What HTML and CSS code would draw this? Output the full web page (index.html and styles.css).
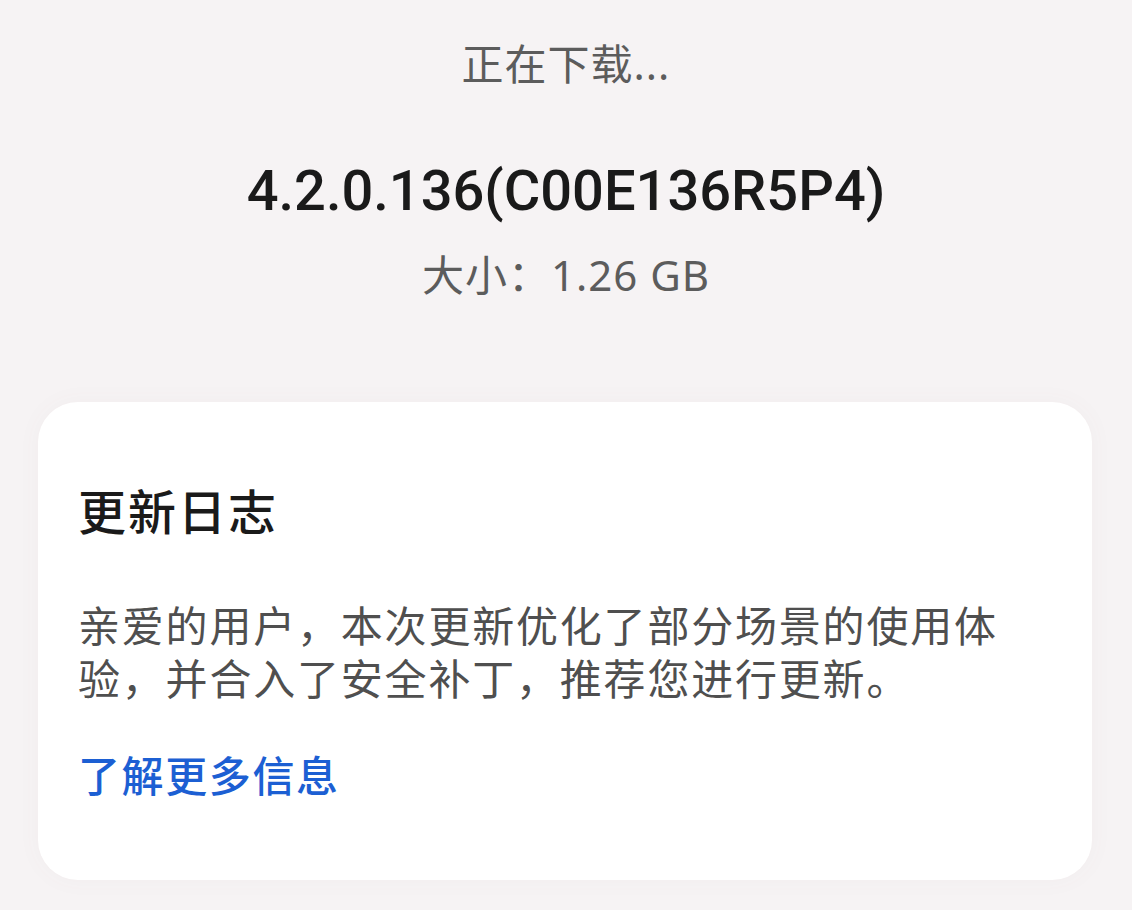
FILE: index.html
```html
<!DOCTYPE html>
<html lang="zh-CN">
<head>
<meta charset="UTF-8">
<meta name="viewport" content="width=device-width, initial-scale=1.0">
<title>软件更新</title>
<link rel="stylesheet" href="styles.css">
</head>
<body>

<div class="page">
  <div class="download-info">
    <div class="status">正在下载...</div>
    <div class="version">4.2.0.136(C00E136R5P4)</div>
    <div class="size">大小：1.26 GB</div>
  </div>

  <div class="changelog">
    <div class="changelog-title">更新日志</div>
    <p class="changelog-text">亲爱的用户，本次更新优化了部分场景的使用体验，并合入了安全补丁，推荐您进行更新。</p>
    <a class="more-link" href="#">了解更多信息</a>
  </div>
</div>

</body>
</html>
```

FILE: styles.css
```css
body {
  font-family: "Noto Sans", "Noto Sans CJK SC", sans-serif;
  margin: 0;
  padding: 0;
  background-color: #f6f3f4;
  color: #1c1c1c;
}

.page {
  width: 1132px;
  height: 910px;
  overflow: hidden;
}

.download-info {
  display: flex;
  flex-direction: column;
  align-items: center;
  padding-top: 34px;
}

.status {
  font-size: 42px;
  line-height: 60px;
  color: #5c5c5c;
  letter-spacing: 1px;
}

.version {
  margin-top: 65px;
  font-family: Roboto, "Noto Sans", sans-serif;
  font-size: 56px;
  font-weight: 500;
  line-height: 64px;
  color: #1a1a1a;
}

.size {
  margin-top: 27px;
  font-size: 42px;
  line-height: 50px;
  letter-spacing: 1px;
  color: #5c5c5c;
}

.changelog {
  margin: 102px 40px 0 38px;
  padding: 80px 60px 78px 40px;
  background: #ffffff;
  border-radius: 40px;
  box-shadow: 0 0 24px rgba(120, 100, 110, 0.04);
}

.changelog-title {
  font-size: 48px;
  font-weight: 500;
  line-height: 60px;
  letter-spacing: 2px;
  color: #1a1a1a;
}

.changelog-text {
  margin: 57px 0 0 0;
  font-size: 42px;
  line-height: 53px;
  letter-spacing: 1.8px;
  color: #4f4f4f;
}

.more-link {
  display: block;
  margin-top: 44px;
  font-size: 42px;
  font-weight: 500;
  line-height: 53px;
  letter-spacing: 1.6px;
  color: #1c5fd3;
  text-decoration: none;
}
```
